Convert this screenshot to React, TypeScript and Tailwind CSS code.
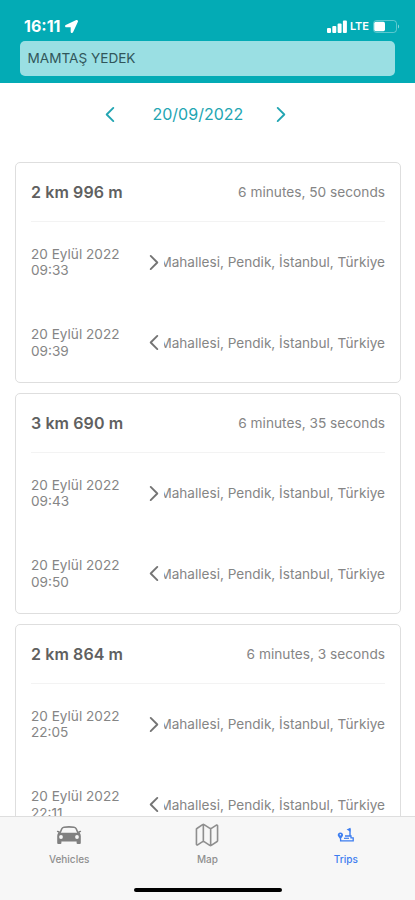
import { FaLocationArrow } from 'react-icons/fa'
import { IoMapOutline } from 'react-icons/io5'

const address = 'Mahallesi, Pendik, İstanbul, Türkiye'

const trips = [
  { distance: '2 km 996 m', duration: '6 minutes, 50 seconds', start: '09:33', end: '09:39' },
  { distance: '3 km 690 m', duration: '6 minutes, 35 seconds', start: '09:43', end: '09:50' },
  { distance: '2 km 864 m', duration: '6 minutes, 3 seconds', start: '22:05', end: '22:11' },
]

function Chevron({ left = false, className = '' }: { left?: boolean; className?: string }) {
  return (
    <svg viewBox="0 0 10 18" fill="none" stroke="currentColor" strokeWidth="2" strokeLinecap="round" strokeLinejoin="round" className={className}>
      <path d={left ? 'M8.5 2 L1.5 9 L8.5 16' : 'M1.5 2 L8.5 9 L1.5 16'} />
    </svg>
  )
}

function StatusBar() {
  return (
    <div className="flex h-[41px] items-end justify-between pb-[7px] pl-6 pr-[15px] text-white">
      <div className="flex items-center gap-[5px]">
        <span className="text-[16px] font-bold leading-4">16:11</span>
        <FaLocationArrow className="h-[13px] w-[13px]" />
      </div>
      <div className="flex h-4 items-center">
        <svg viewBox="0 0 20 13" fill="currentColor" className="h-[13px] w-5">
          <rect x="0" y="8" width="4" height="5" rx="1" />
          <rect x="5.3" y="6" width="4" height="7" rx="1" />
          <rect x="10.6" y="3.5" width="4" height="9.5" rx="1" />
          <rect x="15.9" y="0.5" width="4" height="12.5" rx="1" />
        </svg>
        <span className="ml-[3px] text-[11px] font-semibold leading-4">LTE</span>
        <svg viewBox="0 0 27 13" className="ml-1 h-[13px] w-[27px]">
          <rect x="0.5" y="0.5" width="23" height="12" rx="3" fill="none" stroke="#fff" strokeOpacity="0.35" />
          <rect x="1.2" y="1.8" width="10.8" height="9.4" rx="1.6" fill="#fff" />
          <path d="M25 4.5 C26.5 5 26.5 8 25 8.5 Z" fill="#fff" fillOpacity="0.5" />
        </svg>
      </div>
    </div>
  )
}

function TripPoint({ time, end = false }: { time: string; end?: boolean }) {
  return (
    <div className="flex h-[80.5px] shrink-0 items-center text-[13.6px] text-[#858585]">
      <div className="w-[118px] shrink-0 leading-[16.5px]">
        <div>20 Eylül 2022</div>
        <div>{time}</div>
      </div>
      <Chevron left={end} className="h-[17px] w-[10px] shrink-0 text-[#747474]" />
      <div className="ml-[5px] flex min-w-0 flex-1 justify-end overflow-hidden">
        <span className="shrink-0 whitespace-nowrap leading-5">{address}</span>
      </div>
    </div>
  )
}

function TripCard({ trip }: { trip: (typeof trips)[number] }) {
  return (
    <div className="flex h-[221px] shrink-0 flex-col rounded-[5px] border border-[#dedede] bg-white px-[15px]">
      <div className="flex h-[59px] shrink-0 items-center justify-between border-b border-[#f3f3f3]">
        <span className="text-[16px] font-semibold tracking-[0.1px] text-[#606060]">{trip.distance}</span>
        <span className="text-[13.7px] text-[#858585]">{trip.duration}</span>
      </div>
      <TripPoint time={trip.start} />
      <TripPoint time={trip.end} end />
    </div>
  )
}

function CarIcon() {
  return (
    <svg viewBox="0 0 26 20" className="h-5 w-[26px]">
      <path
        d="M4 8 L5.8 3.8 Q6.4 2.4 8 2.2 Q13 1.5 18 2.2 Q19.6 2.4 20.2 3.8 L22 8"
        fill="none"
        stroke="#808080"
        strokeWidth="1.6"
      />
      <path
        d="M0.8 6.2 Q0.8 5.6 1.8 5.7 L3.6 6.3 L4 7.8 H22 L22.4 6.3 L24.2 5.7 Q25.2 5.6 25.2 6.2 Q25.2 7.1 23.6 7.5 Q24.8 9 24.8 11 V18 Q24.8 19 23.8 19 H21.6 Q20.6 19 20.6 18 V16.5 H5.4 V18 Q5.4 19 4.4 19 H2.2 Q1.2 19 1.2 18 V11 Q1.2 9 2.4 7.5 Q0.8 7.1 0.8 6.2 Z"
        fill="#808080"
      />
      <circle cx="5" cy="12" r="1.9" fill="#f7f7f7" />
      <circle cx="21" cy="12" r="1.9" fill="#f7f7f7" />
    </svg>
  )
}

function TripsIcon() {
  return (
    <svg viewBox="0 0 18 16" fill="none" stroke="currentColor" className="h-4 w-[18px]">
      <path d="M3.4 12.5 L1 9 A2.6 2.6 0 1 1 5.8 9 Z" fill="currentColor" stroke="none" />
      <circle cx="3.4" cy="7.7" r="0.8" fill="#f7f7f7" stroke="none" />
      <path d="M3.6 11.8 V13.9 H16.2 V10.8 H14 V9 H8" strokeWidth="1.3" />
      <path d="M13 9 V1.5" strokeWidth="1.4" />
      <path d="M13.4 0.8 L9.6 2.6 L13.4 4.8 Z" fill="currentColor" stroke="none" />
      <path d="M7 11.3 H12" strokeWidth="1.2" />
    </svg>
  )
}

function TabBar() {
  return (
    <nav className="flex h-[84px] shrink-0 flex-col border-t border-[#dedede] bg-[#f7f7f7] text-[10px] font-medium text-[#8f8f8f]">
      <div className="grid h-[66px] grid-cols-3">
        <div className="flex flex-col items-center">
          <div className="flex h-[36px] items-center">
            <CarIcon />
          </div>
          <span className="leading-3">Vehicles</span>
        </div>
        <div className="flex flex-col items-center">
          <div className="flex h-[36px] items-center">
            <IoMapOutline className="h-[26px] w-[26px]" />
          </div>
          <span className="leading-3">Map</span>
        </div>
        <div className="flex flex-col items-center text-[#3c7df0]">
          <div className="flex h-[36px] items-center">
            <TripsIcon />
          </div>
          <span className="leading-3">Trips</span>
        </div>
      </div>
      <div className="mx-auto mt-[5px] h-[4px] w-[148px] rounded-full bg-black" />
    </nav>
  )
}

export default function App() {
  return (
    <div className="flex h-[900px] w-[415px] flex-col overflow-hidden bg-white font-['Inter',sans-serif]">
      <header className="h-[83px] shrink-0 bg-[#03abb5]">
        <StatusBar />
        <div className="mx-5 flex h-[35px] items-center rounded-[5px] bg-[#9adfe3] px-[7.5px] text-[13.6px] text-[#31565a]">
          MAMTAŞ YEDEK
        </div>
      </header>

      <div className="flex h-[62px] shrink-0 items-center pl-[104.5px] text-[#22a5b2]">
        <Chevron left className="h-[17px] w-[10px]" />
        <span className="ml-[38px] w-[123px] text-[16px]">20/09/2022</span>
        <Chevron className="h-[17px] w-[10px]" />
      </div>

      <main className="flex min-h-0 flex-1 flex-col gap-[10px] overflow-hidden pl-[15px] pr-[14px] pt-[17px]">
        {trips.map((trip) => (
          <TripCard key={trip.start} trip={trip} />
        ))}
      </main>

      <TabBar />
    </div>
  )
}
